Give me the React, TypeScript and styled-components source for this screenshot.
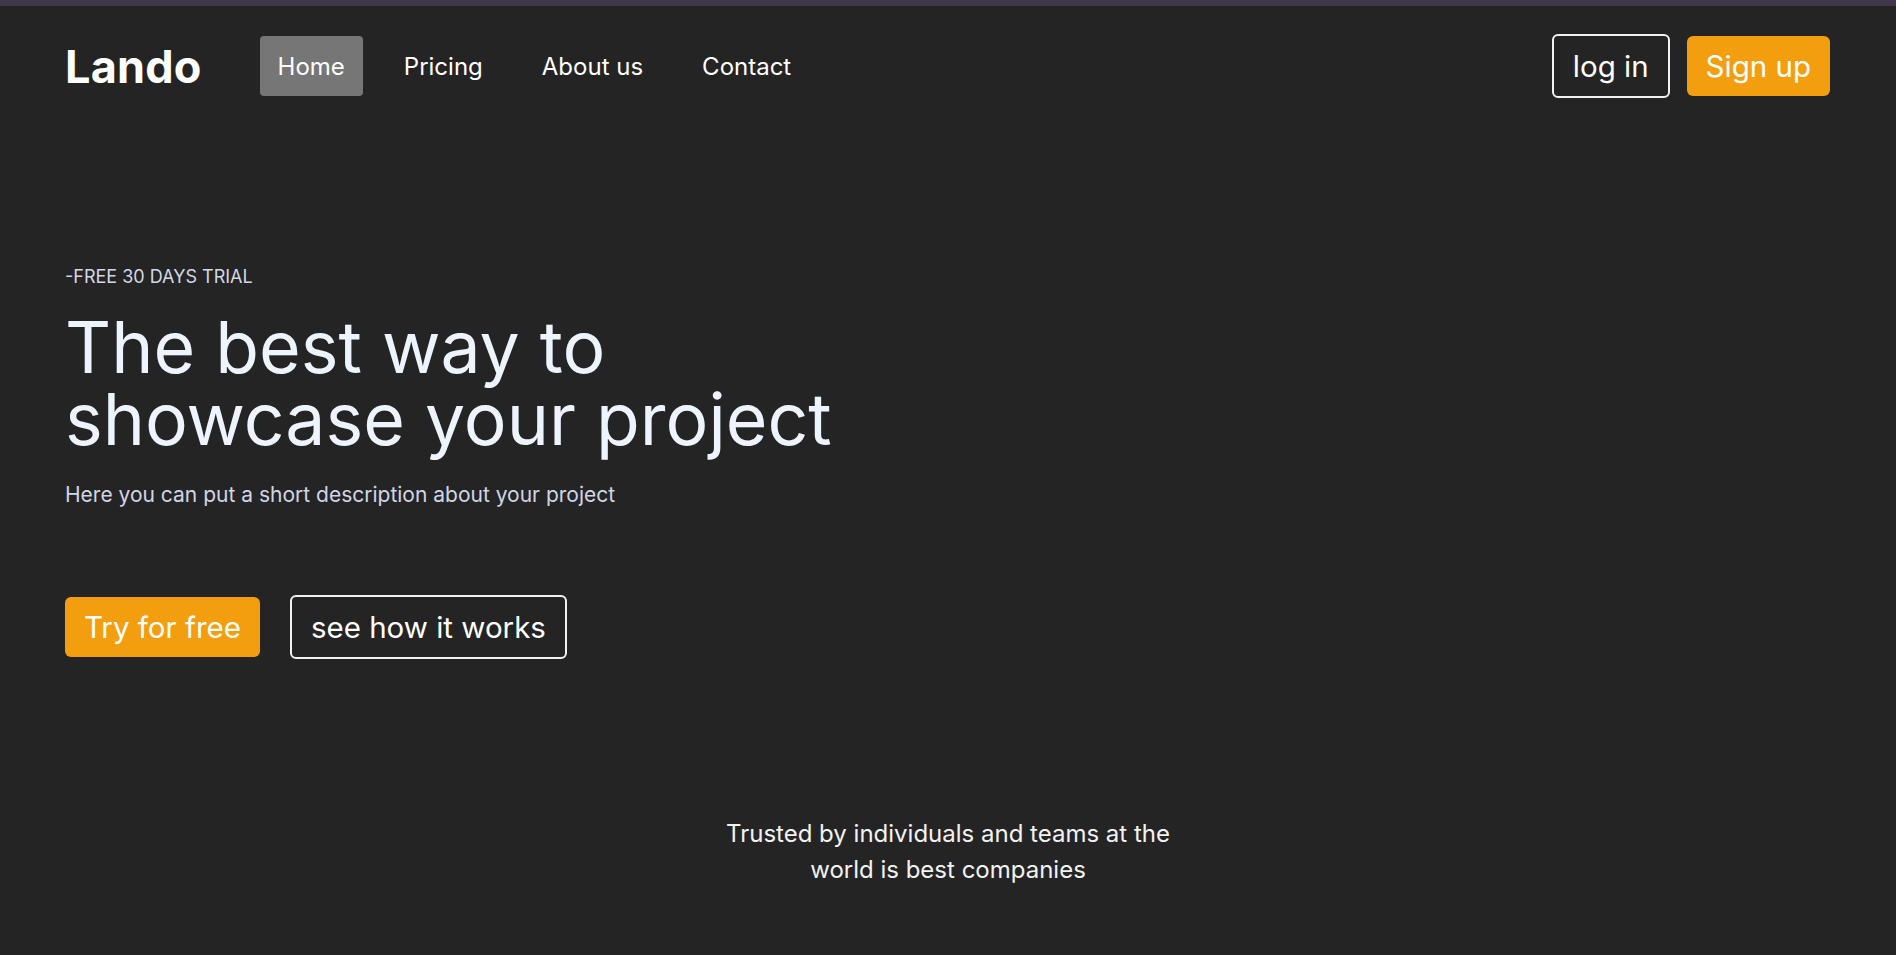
import styled, { createGlobalStyle, css } from "styled-components";

const GlobalStyle = createGlobalStyle`
    * {
        box-sizing: border-box;
    }
    body {
        margin: 0;
        background-color: #242424;
        font-family: Inter, "Noto Sans", "Liberation Sans", sans-serif;
        color: #ffffff;
    }
`

const Page = styled.div`
    min-height: 100vh;
    background-color: #242424;
`

const TopStrip = styled.div`
    height: 6px;
    background-color: #41374d;
    border-bottom: 1px solid #3a3a3c;
`

const Header = styled.header`
    display: flex;
    align-items: center;
    justify-content: space-between;
    height: 120px;
    padding: 0 66px 0 65px;
`

const Left = styled.div`
    display: flex;
    align-items: center;
`

const Brand = styled.h1`
    margin: 0 58px 0 0;
    font-size: 45px;
    font-weight: 700;
    color: #ffffff;
    letter-spacing: 0.2px;
`

const Nav = styled.nav`
    display: flex;
    align-items: center;
    gap: 23px;
`

const NavLink = styled.a<{ $active?: boolean }>`
    display: flex;
    align-items: center;
    height: 60px;
    padding: 0 18px;
    border-radius: 4px;
    font-size: 24px;
    color: #ffffff;
    text-decoration: none;
    background-color: ${(p) => (p.$active ? "#767676" : "transparent")};
`

const Actions = styled.div`
    display: flex;
    align-items: center;
    gap: 17px;
`

const Button = styled.button<{ $variant: "solid" | "outline" }>`
    display: flex;
    align-items: center;
    font-family: inherit;
    font-size: 29.5px;
    color: #ffffff;
    border-radius: 6px;
    cursor: pointer;

    ${(p) =>
        p.$variant === "solid"
            ? css`
                  height: 60px;
                  padding: 0 19px;
                  border: none;
                  background-color: #f39e0f;
              `
            : css`
                  height: 64px;
                  padding: 0 19px;
                  border: 2px solid #f2f2f2;
                  background-color: transparent;
              `}
`

const Hero = styled.section`
    padding: 140px 65px 0;
`

const Kicker = styled.p`
    margin: 0;
    font-size: 18px;
    line-height: 22px;
    color: #d3d8e6;
`

const Title = styled.h2`
    margin: 23px 0 0;
    font-size: 71.5px;
    font-weight: 400;
    line-height: 72px;
    color: #eef4fd;
`

const Description = styled.p`
    margin: 27px 0 0;
    font-size: 21px;
    line-height: 26px;
    color: #d0d6e6;
`

const Cta = styled.div`
    display: flex;
    align-items: center;
    gap: 30px;
    margin-top: 87px;
`

const Trusted = styled.p`
    max-width: 480px;
    margin: 157px auto 0;
    text-align: center;
    font-size: 24px;
    line-height: 36px;
    color: #f2f2f2;
`

const links = ["Home", "Pricing", "About us", "Contact"];

const App = () => (
    <Page>
        <GlobalStyle />
        <TopStrip />
        <Header>
            <Left>
                <Brand>Lando</Brand>
                <Nav>
                    {links.map((link, i) => (
                        <NavLink key={link} href="#" $active={i === 0}>
                            {link}
                        </NavLink>
                    ))}
                </Nav>
            </Left>
            <Actions>
                <Button $variant="outline">log in</Button>
                <Button $variant="solid">Sign up</Button>
            </Actions>
        </Header>

        <Hero>
            <Kicker>-FREE 30 DAYS TRIAL</Kicker>
            <Title>
                The best way to
                <br />
                showcase your project
            </Title>
            <Description>Here you can put a short description about your project</Description>
            <Cta>
                <Button $variant="solid">Try for free</Button>
                <Button $variant="outline">see how it works</Button>
            </Cta>
        </Hero>

        <Trusted>Trusted by individuals and teams at the world is best companies</Trusted>
    </Page>
);

export default App;
